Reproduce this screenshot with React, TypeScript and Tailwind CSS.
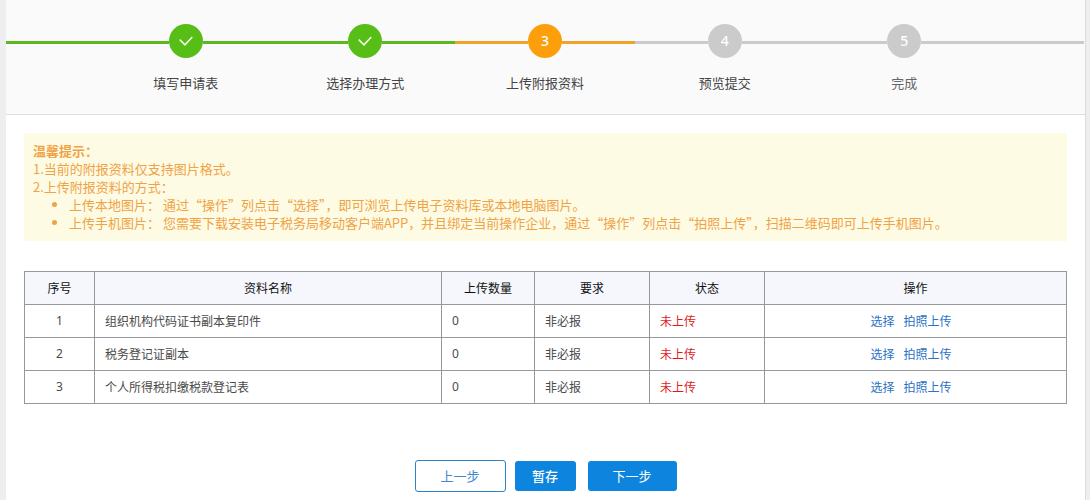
import clsx from "clsx"

const steps = [
    { title: "填写申请表", status: "done" },
    { title: "选择办理方式", status: "done" },
    { title: "上传附报资料", status: "current" },
    { title: "预览提交", status: "todo" },
    { title: "完成", status: "todo" },
]

const rows = [
    { id: 1, name: "组织机构代码证书副本复印件", count: 0, required: "非必报", state: "未上传" },
    { id: 2, name: "税务登记证副本", count: 0, required: "非必报", state: "未上传" },
    { id: 3, name: "个人所得税扣缴税款登记表", count: 0, required: "非必报", state: "未上传" },
]

const stepColor: Record<string, string> = {
    done: "bg-[#57bd17]",
    current: "bg-[#fc9f0b]",
    todo: "bg-[#cbcbcb]",
}

const lineColor: Record<string, string> = {
    done: "bg-[#5cb821]",
    current: "bg-[#f0a32a]",
    todo: "bg-[#cbcbcb]",
}

const Line = ({ status }: { status: string }) => (
    <div className={clsx("mt-[17px] h-[3px] flex-1", lineColor[status])} />
)

const Steps = () => {
    return (
        <header className="border-b border-[#dedede] bg-[#fafafa] pt-6 pr-px pb-[22px]">
            <ol className="grid grid-cols-12">
                <li className="flex" aria-hidden="true"><Line status="done" /></li>
                {
                    steps.map((step, index) => {
                        return (
                            <li key={step.title} className="col-span-2">
                                <div className="flex items-start">
                                    <Line status={step.status} />
                                    <div className={clsx("flex size-[34px] items-center justify-center rounded-full font-['Noto_Sans'] text-sm font-medium text-white", stepColor[step.status])}>
                                        {step.status === "done" ? (
                                            <svg viewBox="0 0 14 10" className="h-[10px] w-[14px]" fill="none" stroke="#f4ffe9" strokeWidth="1.5">
                                                <path d="M0.7 3.6 L6 8.8 L13.3 0.9" />
                                            </svg>
                                        ) : index + 1}
                                    </div>
                                    <Line status={step.status} />
                                </div>
                                <p className={clsx("mt-4 text-center text-[13px] leading-[18px]", index === 4 ? "text-[#666]" : "text-[#444]")}>{step.title}</p>
                            </li>
                        )
                    })
                }
                <li className="flex" aria-hidden="true"><Line status="todo" /></li>
            </ol>
        </header>
    )
}

const Tips = () => {
    return (
        <section className="bg-[#fefbe4] p-[9px] text-[13px] leading-[18px] text-[#efa347]">
            <h2 className="font-bold">温馨提示：</h2>
            <p>1.当前的附报资料仅支持图片格式。</p>
            <p>2.上传附报资料的方式：</p>
            <ul className="list-disc pl-9">
                <li>上传本地图片： 通过“操作”列点击“选择”，即可浏览上传电子资料库或本地电脑图片。</li>
                <li>上传手机图片： 您需要下载安装电子税务局移动客户端APP，并且绑定当前操作企业，通过“操作”列点击“拍照上传”，扫描二维码即可上传手机图片。</li>
            </ul>
        </section>
    )
}

const FileTable = () => {
    return (
        <table className="mt-[30px] w-full table-fixed border-collapse text-xs text-[#4a4a4a] [&_td]:h-[33px] [&_td]:border [&_td]:border-[#96989b] [&_td]:px-[10px] [&_td]:py-0 [&_th]:h-[33px] [&_th]:border [&_th]:border-[#96989b] [&_th]:p-0 [&_th]:font-normal">
            <colgroup>
                <col className="w-[70px]" />
                <col />
                <col className="w-[93px]" />
                <col className="w-[115px]" />
                <col className="w-[115px]" />
                <col className="w-[302px]" />
            </colgroup>
            <thead className="bg-[#f5f7fc] text-[#111]">
                <tr>
                    <th>序号</th>
                    <th>资料名称</th>
                    <th>上传数量</th>
                    <th>要求</th>
                    <th>状态</th>
                    <th>操作</th>
                </tr>
            </thead>
            <tbody>
                {
                    rows.map((row) => {
                        return (
                            <tr key={row.id}>
                                <td className="text-center font-['Noto_Sans']">{row.id}</td>
                                <td>{row.name}</td>
                                <td className="font-['Noto_Sans']">{row.count}</td>
                                <td>{row.required}</td>
                                <td className="text-[#e01a1a]">{row.state}</td>
                                <td>
                                    <div className="flex justify-center text-[#2b71c4]">
                                        <a href="#select" className="mr-[9px]">选择</a>
                                        <a href="#photo" className="mr-[9px]">拍照上传</a>
                                    </div>
                                </td>
                            </tr>
                        )
                    })
                }
            </tbody>
        </table>
    )
}

export default function App() {
    return (
        <div lang="zh-CN" className="flex min-h-screen bg-[#edeeef] pr-1 pl-[6px] font-['Noto_Sans_CJK_SC',sans-serif]">
            <main className="flex-1 border-r border-[#dcdcdc] bg-white">
                <Steps />
                <div className="px-[18px] pt-[18px]">
                    <Tips />
                    <FileTable />
                    <div className="mt-14 flex items-center justify-center text-[13px]">
                        <button type="button" className="h-8 w-[91px] rounded-[3px] border border-[#2b83c8] bg-white text-[#3f88cf]">上一步</button>
                        <button type="button" className="ml-[9px] h-[30px] w-[61px] rounded-[3px] bg-[#0d84de] font-medium text-white">暂存</button>
                        <button type="button" className="ml-3 h-[30px] w-[89px] rounded-[3px] bg-[#0d84de] text-white">下一步</button>
                    </div>
                </div>
            </main>
        </div>
    )
}
